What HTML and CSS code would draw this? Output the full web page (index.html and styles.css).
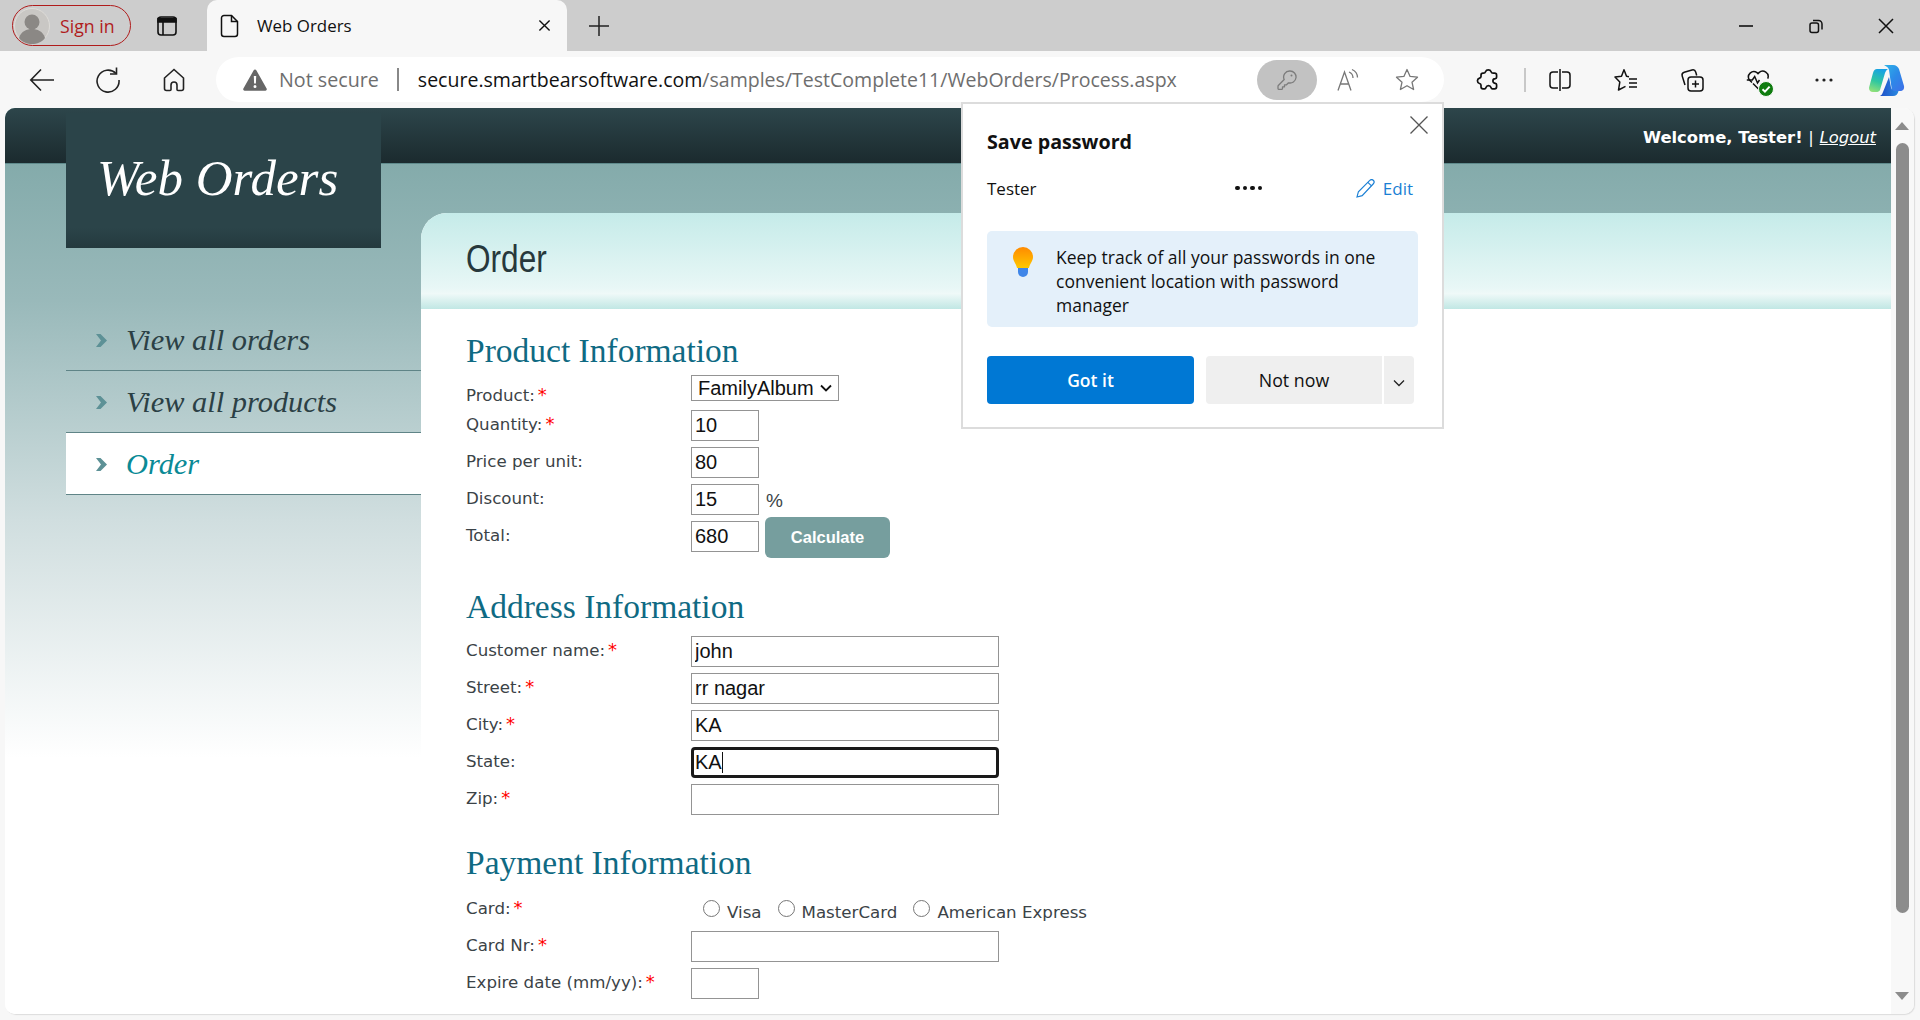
FILE: index.html
```html
<!DOCTYPE html>
<html lang="en">
<head>
    <meta charset="UTF-8">
    <title>Web Orders</title>
    <link rel="stylesheet" href="styles.css">
</head>
<body>
    <div class="tabstrip">
        <div class="signin">
            <svg class="avatar" viewBox="0 0 36 36"><circle cx="18" cy="18" r="17.5" fill="#c9c7c4" stroke="#dedcd8"/><circle cx="18" cy="14" r="7.5" fill="#8b8885"/><path d="M5 30c2-7 8-9 13-9s11 2 13 9c-3 4-8 6-13 6s-10-2-13-6z" fill="#8b8885"/></svg>
            <span>Sign in</span>
        </div>
        <svg class="ic tabs-ic" viewBox="0 0 24 24" fill="none" stroke="#111" stroke-width="1.6"><rect x="3" y="3" width="18" height="18" rx="3"/><path d="M3 4.500h18v3.500H3z" fill="#111"/><path d="M8 8v13"/></svg>
        <div class="tab">
            <svg class="ic doc-ic" viewBox="0 0 20 24" fill="none" stroke="#111" stroke-width="1.5"><path d="M4 1.500h7.500l6 6V20a2.500 2.500 0 0 1-2.500 2.500H4A2.500 2.500 0 0 1 1.500 20V4A2.500 2.500 0 0 1 4 1.500z"/><path d="M11.500 1.500V7.500h6"/></svg>
            <span class="tab-title">Web Orders</span>
            <svg class="ic tab-x" viewBox="0 0 14 14" fill="none" stroke="#111" stroke-width="1.500"><path d="M1.500 1.500l11 11M12.500 1.500l-11 11"/></svg>
        </div>
        <svg class="ic plus" viewBox="0 0 22 22" fill="none" stroke="#222" stroke-width="1.500"><path d="M11 1v20M1 11h20"/></svg>
        <div class="winctl">
            <svg class="ic" viewBox="0 0 16 16" fill="none" stroke="#111" stroke-width="1.600"><path d="M1 8h14"/></svg>
            <svg class="ic" viewBox="0 0 16 16" fill="none" stroke="#111" stroke-width="1.500"><rect x="2" y="5" width="8.500" height="9.500" rx="2"/><path d="M5 2.500h5.500a3.500 3.500 0 0 1 3.500 3.500v5.500"/></svg>
            <svg class="ic" viewBox="0 0 16 16" fill="none" stroke="#111" stroke-width="1.500"><path d="M1 1l14 14M15 1L1 15"/></svg>
        </div>
    </div>

    <div class="toolbar">
        <div class="nav-btns">
            <svg class="ic tb" viewBox="0 0 26 26" fill="none" stroke="#222" stroke-width="1.600"><path d="M25 13H2M12 2.500L1.800 13 12 23.500"/></svg>
            <svg class="ic tb" viewBox="0 0 26 26" fill="none" stroke="#222" stroke-width="1.600"><path d="M21 6.500A11 11 0 1 0 24 13"/><path d="M21.500 0.500v6.500h-6.500"/></svg>
            <svg class="ic tb" viewBox="0 0 26 26" fill="none" stroke="#222" stroke-width="1.600"><path d="M13 2.500L3.500 11v10.500a2 2 0 0 0 2 2h3.500a1 1 0 0 0 1-1V18a3 3 0 0 1 6 0v4.500a1 1 0 0 0 1 1h3.500a2 2 0 0 0 2-2V11z"/></svg>
        </div>
        <div class="addr">
            <svg class="warn" viewBox="0 0 24 22"><path d="M12 .5a1.500 1.500 0 0 1 1.300.8l10.300 18.200a1.500 1.500 0 0 1-1.300 2.200H1.700a1.500 1.500 0 0 1-1.300-2.200L10.700 1.300A1.500 1.500 0 0 1 12 .5z" fill="#666"/><path d="M10.800 7h2.400l-.3 7.500h-1.800zM12 16a1.500 1.500 0 1 1 0 3 1.500 1.500 0 0 1 0-3z" fill="#fff"/></svg>
            <span class="notsec">Not secure</span>
            <span class="addr-sep"></span>
            <span class="url">secure.smartbearsoftware.com<span class="path">/samples/TestComplete11/WebOrders/Process.aspx</span></span>
            <div class="keypill">
                <svg class="ic key" viewBox="0 0 20 20" fill="none" stroke="#7c7c7c" stroke-width="1.300" stroke-linejoin="round"><path d="M13 1a6 6 0 1 1-1.500 11.800L9.500 14.800H7.500v2H5.500v1.700a1 1 0 0 1-1 .9H2a1 1 0 0 1-1-1v-2.200c0-.3.100-.5.300-.7L7.200 9.500A6 6 0 0 1 13 1z"/><circle cx="14.500" cy="5.500" r="1" fill="#7c7c7c" stroke="none"/></svg>
            </div>
            <svg class="ic read" viewBox="0 0 22 24" fill="none" stroke="#777" stroke-width="1.300"><path d="M1 22.500L7.500 4l6.500 18.500M3.200 16h8.600"/><path d="M12 4c2.500 1 4 3.200 4 6M15 1.500c3.200 1.500 5.500 4.500 5.500 8"/></svg>
            <svg class="ic star" viewBox="0 0 24 24" fill="none" stroke="#777" stroke-width="1.300"><path d="M12 1.500l3.100 6.900 7.400.8-5.500 5 1.600 7.300-6.600-3.800-6.600 3.800 1.600-7.300-5.500-5 7.400-.8z" stroke-linejoin="round"/></svg>
        </div>
        <div class="tools">
            <svg class="ic tl" viewBox="0 0 24 24" fill="none" stroke="#111" stroke-width="1.700"><path d="M9.500 3.700a3 3 0 0 1 5.600 0c.3 1 1 1.500 2 1.500h1.500a2 2 0 0 1 2 2v2c0 .8-.6 1.200-1.300 1.400a2.400 2.400 0 0 0 0 4.800c.7.200 1.300.6 1.300 1.400v2a2 2 0 0 1-2 2h-2.200c-.8 0-1.200-.6-1.400-1.300a2.600 2.600 0 0 0-5 0c-.2.700-.6 1.300-1.400 1.300H7a2 2 0 0 1-2-2v-1.800c-.1-.8-.7-1.300-1.500-1.500a2.800 2.800 0 0 1 0-5.400c.8-.2 1.400-.7 1.500-1.500V7.200a2 2 0 0 1 2-2h.5c1 0 1.700-.5 2-1.500z"/></svg>
            <span class="tool-sep"></span>
            <svg class="ic tl split" viewBox="0 0 24 24" fill="none" stroke="#111" stroke-width="1.500"><path d="M10 4H5a3 3 0 0 0-3 3v10a3 3 0 0 0 3 3h5M14 4h5a3 3 0 0 1 3 3v10a3 3 0 0 1-3 3h-5"/><path d="M12 1v22"/></svg>
            <svg class="ic tl fav" viewBox="0 0 24 24" fill="none" stroke="#111" stroke-width="1.500"><path d="M15 8.700l-2.500-.4L10 1.800 7.500 8.300l-6.500.8 4.800 5-1.300 7.900 7-3.600" stroke-linejoin="round"/><path d="M15 11h8M15 15h8M15 19h8"/></svg>
            <svg class="ic tl coll" viewBox="0 0 24 24" fill="none" stroke="#111" stroke-width="1.500"><rect x="8" y="9" width="15" height="14" rx="3"/><path d="M15.500 12.500v7M12 16h7"/><path d="M5 17L2.200 8a3 3 0 0 1 2-3.700L12 2a3 3 0 0 1 3.700 2l1 3.500"/></svg>
            <div class="health">
                <svg class="ic tl" viewBox="0 0 24 24" fill="none" stroke="#111" stroke-width="1.500"><path d="M6 14.500L3.400 12A5.400 5.400 0 0 1 11 4.600l1 1 1-1a5.400 5.400 0 0 1 8.700 6"/><path d="M.8 12h5.500l2.400-3.500 2.800 6.500 2-3M7 15.500l6 6"/></svg>
                <span class="badge"><svg viewBox="0 0 12 12" fill="none" stroke="#fff" stroke-width="1.700"><path d="M3 6.200l2.100 2.100 4-4.400"/></svg></span>
            </div>
            <svg class="ic tl" viewBox="0 0 24 24" fill="#222"><circle cx="5" cy="12" r="1.600"/><circle cx="12" cy="12" r="1.600"/><circle cx="19" cy="12" r="1.600"/></svg>
            <svg class="ic copilot" viewBox="0 0 36 32">
                <defs>
                    <linearGradient id="cpA" x1="0" y1="0" x2="1" y2="1"><stop offset="0" stop-color="#2fb4e8"/><stop offset="0.500" stop-color="#2c8ae8"/><stop offset="1" stop-color="#3f6fe8"/></linearGradient>
                    <linearGradient id="cpB" x1="0.600" y1="0" x2="0.300" y2="1"><stop offset="0" stop-color="#16a0e6"/><stop offset="0.550" stop-color="#2fc7a0"/><stop offset="1" stop-color="#8fe07a"/></linearGradient>
                    <linearGradient id="cpC" x1="0" y1="0" x2="1" y2="0"><stop offset="0" stop-color="#1e4fc8"/><stop offset="1" stop-color="#2a8ae0"/></linearGradient>
                </defs>
                <path d="M15 1h9c3 0 5 2 6 4l5 17c.5 3-1 5-4 5h-8l-3-21c-.4-2-2-3.500-5-5z" fill="url(#cpA)"/>
                <path d="M8 5h11c-1.500 1-2.500 2.500-3 4l-5 17c-.6 1.500-2 2-4 2H4c-3 0-4.500-2.500-3.800-5L4 9c.7-2.500 2-4 4-4z" fill="url(#cpB)"/>
                <path d="M20 13l-6 15c-.6 2-1.500 3-3 4h13c3 0 5-2 5.500-5H26c-2 0-3.500-1.500-4-3.500z" fill="url(#cpC)"/>
            </svg>
        </div>
    </div>

    <div class="page">
        <div class="viewport">
            <div class="top-band">
                <span class="welcome">Welcome, Tester! <span class="pipe">|</span> <a class="logout">Logout</a></span>
            </div>
            <div class="layout">
                <aside class="side">
                    <div class="logo">Web Orders</div>
                    <ul class="menu">
                        <li><svg class="chev" viewBox="0 0 11 13"><path d="M0 0h4.500L11 6.500 4.500 13H0l5-6.500z"/></svg>View all orders</li>
                        <li><svg class="chev" viewBox="0 0 11 13"><path d="M0 0h4.500L11 6.500 4.500 13H0l5-6.500z"/></svg>View all products</li>
                        <li class="active"><svg class="chev" viewBox="0 0 11 13"><path d="M0 0h4.500L11 6.500 4.500 13H0l5-6.500z"/></svg>Order</li>
                    </ul>
                </aside>
                <main class="content">
                    <div class="content-head"><h1>Order</h1></div>
                    <div class="content-body">
                        <h2 class="first">Product Information</h2>
                        <div class="row row-select">
                            <label>Product:<i>*</i></label>
                            <div class="select"><span>FamilyAlbum</span><svg viewBox="0 0 12 8" fill="none" stroke="#111" stroke-width="1.800"><path d="M1 1.500l5 5 5-5"/></svg></div>
                        </div>
                        <div class="row"><label>Quantity:<i>*</i></label><input class="short" value="10"></div>
                        <div class="row"><label>Price per unit:</label><input class="short" value="80"></div>
                        <div class="row"><label>Discount:</label><input class="short" value="15"><span class="pct">%</span></div>
                        <div class="row"><label>Total:</label><input class="short" value="680"><button class="calc">Calculate</button></div>

                        <h2 class="address">Address Information</h2>
                        <div class="row"><label>Customer name:<i>*</i></label><input class="long" value="john"></div>
                        <div class="row"><label>Street:<i>*</i></label><input class="long" value="rr nagar"></div>
                        <div class="row"><label>City:<i>*</i></label><input class="long" value="KA"></div>
                        <div class="row"><label>State:</label><div class="long fake-focus">KA<span class="caret"></span></div></div>
                        <div class="row"><label>Zip:<i>*</i></label><input class="long" value=""></div>

                        <h2 class="payment">Payment Information</h2>
                        <div class="row">
                            <label>Card:<i>*</i></label>
                            <div class="radios">
                                <span class="radio"></span><span class="rlabel">Visa</span>
                                <span class="radio"></span><span class="rlabel">MasterCard</span>
                                <span class="radio"></span><span class="rlabel">American Express</span>
                            </div>
                        </div>
                        <div class="row"><label>Card Nr:<i>*</i></label><input class="long" value=""></div>
                        <div class="row"><label>Expire date (mm/yy):<i>*</i></label><input class="short" value=""></div>
                    </div>
                </main>
            </div>
        </div>
        <div class="scrollbar">
            <span class="arrow up"></span>
            <span class="thumb"></span>
            <span class="arrow down"></span>
        </div>
    </div>

    <div class="popup">
        <svg class="ic pop-x" viewBox="0 0 18 18" fill="none" stroke="#555" stroke-width="1.300"><path d="M.5.5l17 17M17.500.5l-17 17"/></svg>
        <div class="pop-title">Save password</div>
        <div class="pop-cred">
            <span class="pop-user">Tester</span>
            <span class="pop-dots"><b></b><b></b><b></b><b></b></span>
            <span class="pop-edit">
                <svg class="ic" viewBox="0 0 20 20" fill="none" stroke="#1a7fd4" stroke-width="1.200"><path d="M1 19l1.500-5.500L14.500 1.500a2.500 2.500 0 0 1 3.800 3.500L6.500 17.500z"/><path d="M12.500 3.500l3.800 3.800"/></svg>
                Edit
            </span>
        </div>
        <div class="pop-info">
            <svg class="bulb" viewBox="0 0 20 30">
                <defs><linearGradient id="bulbG" x1="0" y1="0" x2="0" y2="1"><stop offset="0" stop-color="#ff8a00"/><stop offset="1" stop-color="#ffc800"/></linearGradient></defs>
                <path d="M10 0a10 10 0 0 1 10 10c0 4-3 6-4 11H4C3 16 0 14 0 10A10 10 0 0 1 10 0z" fill="url(#bulbG)"/>
                <path d="M5 21h10v4a5 5 0 0 1-10 0z" fill="#3f86e8"/>
            </svg>
            <p>Keep track of all your passwords in one convenient location with password manager</p>
        </div>
        <div class="pop-actions">
            <button class="gotit">Got it</button>
            <button class="notnow">Not now</button>
            <button class="more"><svg viewBox="0 0 12 8" fill="none" stroke="#222" stroke-width="1.300"><path d="M1 1.500l5 5 5-5"/></svg></button>
        </div>
    </div>
</body>
</html>
```

FILE: styles.css
```css
* { box-sizing: border-box; }
html, body { margin: 0; height: 1020px; overflow: hidden; }
body { background: #f7f7f7; font-family: "Open Sans", "Noto Sans", sans-serif; position: relative; }
.ic { display: block; flex: none; }

/* browser chrome */
.tabstrip { height: 51px; background: #cdcdcd; display: flex; align-items: center; }
.signin { width: 119px; height: 41px; margin-left: 12px; border: 1.5px solid #b01c1c; border-radius: 21px; display: flex; align-items: center; gap: 10px; padding-left: 1px; color: #b01c1c; font-size: 17.700px; }
.avatar { width: 36px; height: 36px; }
.tabs-ic { width: 24px; height: 24px; margin-left: 24px; }
.tab { width: 360px; height: 51px; margin-left: 28px; background: #f7f7f7; border-radius: 10px 10px 0 0; display: flex; align-items: center; padding-left: 13px; }
.doc-ic { width: 20px; height: 24px; }
.tab-title { margin-left: 17px; font-size: 16.900px; color: #111; flex: 1; }
.tab-x { width: 13px; height: 13px; margin-right: 16px; }
.plus { width: 22px; height: 22px; margin-left: 21px; }
.winctl { margin-left: auto; margin-right: 26px; display: flex; gap: 54px; }
.winctl .ic { width: 16px; height: 16px; }

.toolbar { height: 57px; display: flex; align-items: center; }
.nav-btns { display: flex; gap: 40px; margin-left: 29px; width: 187px; }
.tb { width: 26px; height: 26px; }
.addr { width: 1228px; height: 45px; background: #fff; border-radius: 23px; display: flex; align-items: center; padding-left: 27px; position: relative; }
.warn { width: 24px; height: 22px; flex: none; }
.notsec { margin-left: 12px; color: #6e6e6e; font-size: 19.700px; }
.addr-sep { width: 2px; height: 23px; background: #888; margin: 0 19px 0 18px; }
.url { color: #111; flex: 1; white-space: nowrap; font-size: 19.550px; }
.path { color: #6e6e6e; }
.keypill { width: 60px; height: 40px; background: #c2c2c2; border-radius: 20px; display: flex; align-items: center; justify-content: center; }
.key { width: 20px; height: 20px; }
.read { width: 22px; height: 24px; margin-left: 20px; }
.star { width: 24px; height: 24px; margin-left: 36px; margin-right: 25px; }
.tools { display: flex; align-items: center; margin-left: 32px; position: relative; }
.tl { width: 24px; height: 24px; }
.tool-sep { width: 2px; height: 24px; background: #c8c8c8; margin: 0 22px 0 24px; }
.split { margin-right: 42px; }
.fav { margin-right: 42px; }
.coll { margin-right: 42px; }
.health { position: relative; margin-right: 42px; }
.badge { position: absolute; right: -4px; bottom: -5px; width: 16px; height: 16px; border-radius: 50%; background: #107c10; display: flex; border: 1px solid #f7f7f7; }
.copilot { width: 36px; height: 32px; margin-left: 33px; }

/* page */
.page { margin-left: 5px; width: 1909px; height: 906px; display: flex; border-radius: 10px; overflow: hidden; background: #fff; box-shadow: 1px 1px 1px #dcdcdc; }
.viewport { width: 1886px; height: 906px; overflow: hidden; background: linear-gradient(#84abab 56px, #99b9ba 192px, #d0dedf 412px, #fff 650px); }
.top-band { height: 56px; background: linear-gradient(#2d464b, #1b2a2e); border-bottom: 1px solid #5f8a8c; display: flex; justify-content: flex-end; align-items: center; padding-right: 15px; color: #fff; font-family: "DejaVu Sans", sans-serif; font-size: 16.400px; }
.welcome { font-weight: bold; margin-top: 4px; }
.pipe { font-weight: normal; }
.logout { font-weight: normal; font-style: italic; text-decoration: underline; }
.layout { display: flex; margin-left: 61px; }
.side { width: 355px; margin-top: -51px; flex: none; position: relative; }
.logo { width: 315px; height: 135px; background: linear-gradient(#2b4449 85%, #243a3e); color: #fff; font: italic 51px "Liberation Serif", serif; padding: 36px 0 0 31px; }
.menu { list-style: none; margin: 61px 0 0; padding: 0; }
.menu li { height: 62px; border-bottom: 1.500px solid #5f8487; display: flex; align-items: center; padding: 2px 0 0 30px; font: italic 30.400px "Liberation Serif", serif; color: #2b4045; }
.menu li.active { background: #fff; color: #0a8a96; }
.chev { width: 11px; height: 13px; margin-right: 19px; fill: #5d9196; }

.content { width: 1470px; margin-top: 49px; background: #fff; border-radius: 26px 0 0 0; min-height: 801px; }
.content-head { height: 96px; border-radius: 26px 0 0 0; background: linear-gradient(#c5ebe9, #e8f7f6 78%, #eff9f8 84%, #c1e7e4); padding: 24px 0 0 45px; }
h1 { margin: 0; display: inline-block; font: normal 39px "Liberation Sans", sans-serif; color: #27383c; transform: scaleX(.81); transform-origin: left center; }
.content-body { padding: 0 0 0 45px; }
h2 { margin: 0; font: normal 33.500px "Liberation Serif", serif; color: #0f6a83; height: 36px; line-height: 36px; }
h2.first { margin: 24px 0 6px; }
h2.address { margin: 37px 0 11px; }
h2.payment { margin: 30px 0 13px; }
.row { display: flex; align-items: center; height: 31px; margin-bottom: 6px; position: relative; }
.row-select { height: 26px; margin-bottom: 9px; }
label { width: 225px; flex: none; margin-top: -3px; font-family: "DejaVu Sans", sans-serif; font-size: 16.670px; color: #3b4347; }
label i { font-style: normal; font-size: 18px; line-height: 0; color: #f00; margin-left: 3px; }
input, .fake-focus { height: 31px; border: 1.500px solid #949494; font: 20px "Liberation Sans", sans-serif; color: #111; padding: 0 3px; outline: none; background: #fff; border-radius: 0; }
input.short { width: 68px; }
input.long, .fake-focus { width: 308px; }
.fake-focus { border: 3px solid #1a1a1a; border-radius: 4px; display: flex; align-items: center; padding: 0 2px 0 1px; }
.caret { width: 1px; height: 21px; background: #111; }
.select { width: 148px; height: 26px; border: 1.500px solid #949494; display: flex; align-items: center; justify-content: space-between; padding: 0 6px; font: 20px "Liberation Sans", sans-serif; color: #111; }
.select svg { width: 12px; height: 8px; }
.row-select label { margin-top: 14px; }
.pct { margin-left: 7px; margin-top: 3px; font: 19px "Liberation Sans", sans-serif; color: #3b4347; }
.calc { width: 125px; height: 41px; margin-left: 6px; margin-top: 2px; border: none; border-radius: 6px; background: #769e9e; color: #fff; font: bold 16.500px "Liberation Sans", sans-serif; }
.radios { display: flex; align-items: center; font-family: "DejaVu Sans", sans-serif; font-size: 16.670px; color: #3b4347; margin-left: 12px; }
.radio { width: 17px; height: 17px; border: 1.500px solid #767676; border-radius: 50%; background: #fff; margin-top: -3px; flex: none; }
.rlabel { margin: 5px 16px 0 7px; white-space: nowrap; }

.scrollbar { width: 23px; background: #f8f8f8; position: relative; }
.thumb { position: absolute; left: 5px; top: 35px; width: 13px; height: 770px; background: #8c8c8c; border-radius: 7px; }
.arrow { position: absolute; left: 4px; width: 0; height: 0; border-left: 7.500px solid transparent; border-right: 7.500px solid transparent; }
.arrow.up { top: 14px; border-bottom: 8px solid #8c8c8c; }
.arrow.down { top: 884px; border-top: 8px solid #8c8c8c; }

/* save password bubble */
.popup { position: absolute; left: 961px; top: 102px; width: 483px; height: 327px; background: #fff; border: 2px solid #dcdcdc; padding: 0 24px; color: #111; }
.pop-x { position: absolute; left: 447px; top: 12px; width: 18px; height: 18px; }
.pop-title { margin-top: 25px; font-size: 19.700px; font-weight: 700; line-height: 26px; }
.pop-cred { display: flex; align-items: center; height: 26px; margin-top: 20px; font-size: 17px; position: relative; }
.pop-user { width: 248px; }
.pop-dots { display: flex; gap: 3px; }
.pop-dots b { width: 4.500px; height: 4.500px; background: #111; border-radius: 50%; }
.pop-edit { margin-left: auto; margin-right: 5px; display: flex; align-items: center; gap: 8px; color: #1a7fd4; }
.pop-edit svg { width: 19px; height: 19px; }
.pop-info { width: 431px; height: 96px; margin-top: 30px; background: #e4f0fa; border-radius: 5px; display: flex; padding: 16px 18px 0 26px; }
.bulb { width: 20px; height: 30px; flex: none; }
.pop-info p { margin: -2px 0 0 23px; font-size: 17.500px; line-height: 24px; }
.pop-actions { display: flex; margin-top: 29px; }
.pop-actions button { height: 48px; border: none; padding-bottom: 2px; font: 600 17.500px "Open Sans", sans-serif; }
.gotit { width: 207px; background: #0078d4; color: #fff; border-radius: 4px; margin-right: 12px; }
.pop-actions .notnow { width: 176px; background: #efefef; color: #111; border-radius: 4px 0 0 4px; font-weight: 400; font-size: 17.800px; margin-right: 2px; }
.pop-actions .more { width: 30px; background: #efefef; border-radius: 0 4px 4px 0; padding: 0; }
.more svg { width: 12px; height: 8px; }
```
